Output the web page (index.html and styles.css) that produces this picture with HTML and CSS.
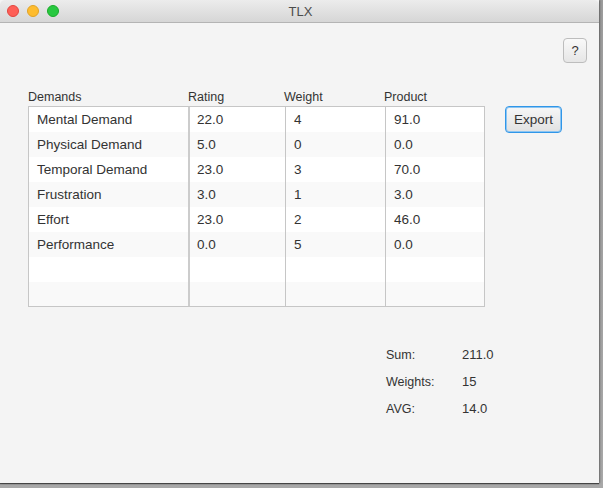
FILE: index.html
```html
<!DOCTYPE html>
<html>
<head>
<meta charset="utf-8">
<title>TLX</title>
<link rel="stylesheet" href="styles.css">
</head>
<body>
<div class="window">
  <div class="titlebar">
    <div class="lights">
      <span class="light red"></span>
      <span class="light yellow"></span>
      <span class="light green"></span>
    </div>
    <div class="title">TLX</div>
    <div></div>
  </div>
  <div class="content">
    <div class="toolbar"><button class="help">?</button></div>
    <div class="main">
      <div class="table">
        <div class="thead">
          <div>Demands</div>
          <div>Rating</div>
          <div>Weight</div>
          <div>Product</div>
        </div>
        <div class="tbody">
          <div class="col c1">
            <div class="cell">Mental Demand</div>
            <div class="cell">Physical Demand</div>
            <div class="cell">Temporal Demand</div>
            <div class="cell">Frustration</div>
            <div class="cell">Effort</div>
            <div class="cell">Performance</div>
            <div class="cell"></div>
            <div class="cell"></div>
          </div>
          <div class="col c2">
            <div class="cell">22.0</div>
            <div class="cell">5.0</div>
            <div class="cell">23.0</div>
            <div class="cell">3.0</div>
            <div class="cell">23.0</div>
            <div class="cell">0.0</div>
            <div class="cell"></div>
            <div class="cell"></div>
          </div>
          <div class="col c3">
            <div class="cell">4</div>
            <div class="cell">0</div>
            <div class="cell">3</div>
            <div class="cell">1</div>
            <div class="cell">2</div>
            <div class="cell">5</div>
            <div class="cell"></div>
            <div class="cell"></div>
          </div>
          <div class="col c4">
            <div class="cell">91.0</div>
            <div class="cell">0.0</div>
            <div class="cell">70.0</div>
            <div class="cell">3.0</div>
            <div class="cell">46.0</div>
            <div class="cell">0.0</div>
            <div class="cell"></div>
            <div class="cell"></div>
          </div>
        </div>
      </div>
      <button class="export">Export</button>
    </div>
    <div class="stats">
      <div class="label">Sum:</div><div class="value">211.0</div>
      <div class="label">Weights:</div><div class="value">15</div>
      <div class="label">AVG:</div><div class="value">14.0</div>
    </div>
  </div>
</div>
</body>
</html>
```
FILE: styles.css
```css
html, body {
  margin: 0;
  padding: 0;
}
body {
  width: 603px;
  height: 488px;
  background: linear-gradient(#9c9c9c, #a8a8a8);
  font-family: "Liberation Sans", Arial, sans-serif;
  color: #333;
  overflow: hidden;
}
.window {
  width: 599px;
  height: 483px;
  background: #f4f4f4;
  box-shadow: 0 1px 1px rgba(0,0,0,0.55), 1px 0 2px rgba(0,0,0,0.3);
  display: flex;
  flex-direction: column;
}
.titlebar {
  height: 22px;
  border-bottom: 1px solid #b4b4b4;
  background: linear-gradient(#ececec, #d6d6d6);
  display: grid;
  grid-template-columns: 1fr auto 1fr;
  align-items: center;
  border-radius: 5px 5px 0 0;
}
.lights {
  display: flex;
  gap: 8px;
  padding-left: 7px;
}
.light {
  width: 12px;
  height: 12px;
  border-radius: 50%;
  box-sizing: border-box;
}
.red { background: #fe5f57; border: 1px solid #e2463f; }
.yellow { background: #febc2e; border: 1px solid #e1a325; }
.green { background: #28c840; border: 1px solid #1aab29; }
.title {
  font-size: 13px;
  color: #4c4c4c;
  padding-left: 2px;
}
.content {
  flex: 1;
  display: flex;
  flex-direction: column;
}
.toolbar {
  display: flex;
  justify-content: flex-end;
  padding: 15px 12px 0 0;
}
.help {
  width: 24px;
  height: 25px;
  padding: 0;
  border: 1px solid #bdbdbd;
  border-radius: 4px;
  background: linear-gradient(#f9f9f9, #e6e6e6);
  font-family: "Liberation Sans", Arial, sans-serif;
  font-size: 13px;
  color: #333;
}
.main {
  display: flex;
  align-items: flex-start;
  padding-left: 28px;
  margin-top: 25px;
}
.thead {
  display: grid;
  grid-template-columns: 160px 96px 100px 101px;
  height: 18px;
  line-height: 18px;
  font-size: 12.5px;
  color: #333;
}
.tbody {
  display: flex;
  width: 455px;
  height: 199px;
  border: 1px solid #c6c6c6;
  overflow: hidden;
  background: #fff;
}
.col {
  display: flex;
  flex-direction: column;
}
.c1 { width: 159px; }
.c2 { width: 95px; border-left: 2px solid #cccccc; }
.c3 { width: 99px; border-left: 1px solid #c6c6c6; }
.c4 { width: 98px; border-left: 1px solid #c6c6c6; }
.cell {
  flex: none;
  height: 25px;
  line-height: 25px;
  padding-left: 8px;
  font-size: 13.5px;
  color: #333;
  background: #fff;
  white-space: nowrap;
}
.c2 .cell { padding-left: 7px; }
.cell:nth-child(even) { background: #f9f9f9; }
.export {
  margin: 18px 0 0 20px;
  width: 57px;
  height: 27px;
  padding: 0;
  border: 1px solid #3096e8;
  border-radius: 4px;
  box-shadow: inset 0 0 0 1px #8cc5f2;
  background: linear-gradient(#f7f7f7, #e1e1e1);
  font-family: "Liberation Sans", Arial, sans-serif;
  font-size: 13.5px;
  color: #333;
}
.stats {
  display: grid;
  grid-template-columns: 76px auto;
  grid-auto-rows: 27px;
  align-items: center;
  margin: 34px 0 0 386px;
}
.label { font-size: 12.5px; color: #333; }
.value { font-size: 13px; color: #333; }
```
